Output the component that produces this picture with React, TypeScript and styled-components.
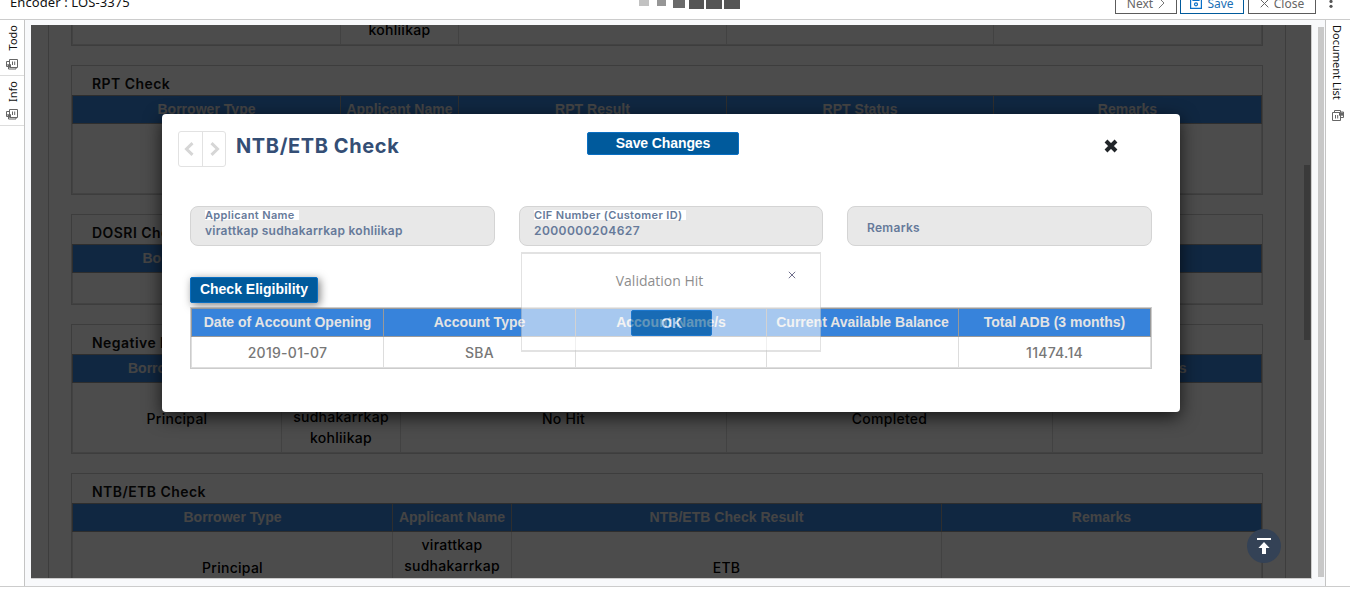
import React from "react";
import styled, { createGlobalStyle } from "styled-components";

const sans = `"Noto Sans", "Open Sans", sans-serif`;
const arial = `"Liberation Sans", Arial, sans-serif`;
const geo = `Inter, "Open Sans", sans-serif`;

const GlobalStyle = createGlobalStyle`
  *, *::before, *::after { box-sizing: border-box; }
  body { margin: 0; background: #fff; overflow: hidden; }
  svg { display: block; flex: none; }
`;

const Shell = styled.div`
  width: 1350px;
  height: 602px;
  display: flex;
  flex-direction: column;
  overflow: hidden;
  background: #fff;
  font-family: ${sans};
`;

const TopBar = styled.header`
  flex: none;
  height: 20px;
  border-bottom: 1px solid #ccc;
  display: flex;
  align-items: flex-start;
  overflow: hidden;
  padding: 0 15px 0 10px;
`;

const Crumb = styled.div`
  width: 629px;
  margin-top: -7px;
  font-size: 13px;
  letter-spacing: 0.1px;
  line-height: 18px;
  color: #111;
  white-space: nowrap;
`;

const Brand = styled.div`
  width: 476px;
  display: flex;
`;

const BrandTile = styled.i<{ $w: number; $h: number; $gap: number; $tone: string }>`
  width: ${(p) => p.$w}px;
  height: ${(p) => p.$h}px;
  margin-right: ${(p) => p.$gap}px;
  background: ${(p) => p.$tone};
`;

const Actions = styled.div`
  display: flex;
  margin-top: -10px;
`;

const ActionButton = styled.button<{ $width: number; $gap: number; $accent?: boolean }>`
  width: ${(p) => p.$width}px;
  height: 24px;
  margin: 0 ${(p) => p.$gap}px 0 0;
  padding: 2px 0 0;
  border: 1px solid ${(p) => (p.$accent ? "#005a9c" : "#5c5c5c")};
  background: #fff;
  color: ${(p) => (p.$accent ? "#1a6fb5" : "#666")};
  display: flex;
  align-items: center;
  justify-content: center;
  gap: 5px;
  font: 12px ${sans};
`;

const Main = styled.div`
  flex: none;
  height: 567px;
  display: flex;
  border-bottom: 1px solid #ccc;
  background: #f8f9fb;
`;

const Rail = styled.aside<{ $side: "left" | "right" }>`
  width: 25px;
  flex: none;
  background: #fff;
  border: 0 solid #c4c4c4;
  border-width: ${(p) => (p.$side === "left" ? "0 1px 0 0" : "0 0 0 1px")};
`;

const RailTab = styled.div<{ $height: number; $flip?: boolean }>`
  height: ${(p) => p.$height}px;
  display: flex;
  flex-direction: column;
  align-items: center;
  justify-content: space-between;
  padding: 5px ${(p) => (p.$flip ? 0 : 1)}px ${(p) => (p.$flip ? 5 : 6)}px 0;
  border-bottom: ${(p) => (p.$flip ? "1px solid #ddd" : "0")};
`;

const RailLabel = styled.span<{ $flip?: boolean }>`
  writing-mode: vertical-rl;
  transform: ${(p) => (p.$flip ? "rotate(180deg)" : "none")};
  font-size: 11px;
  line-height: 15px;
  color: #111;
  white-space: nowrap;
`;

const Frame = styled.main`
  position: relative;
  width: 1281px;
  height: 554px;
  margin: 5px 0 0 6px;
  border: 0 solid #ccc;
  border-width: 0 1px 1px 0;
  overflow: hidden;
  background: #fff;
`;

const ScrollTrack = styled.div`
  margin: 7px 1px 0 6px;
  width: 6px;
  height: 550px;
  background: #c8c8c8;
`;

const Page = styled.div`
  width: 1238px;
  margin: -109px 0 0 17px;
  padding: 0 22px;
  border: 0 solid #ccc;
  border-width: 0 1px;
  display: flex;
  flex-direction: column;
  gap: 19px;
`;

const Card = styled.section`
  border: 1px solid #ccc;
  flex: none;
`;

const CardTitle = styled.h3`
  margin: 0;
  height: 29px;
  padding: 7px 0 0 20px;
  font: 600 14px/21px ${geo};
  letter-spacing: 0.45px;
  color: #111;
`;

const Table = styled.div<{ $body: number }>`
  display: grid;
  grid-template-rows: 29px ${(p) => p.$body}px;
`;

const Row = styled.div<{ $cols: string }>`
  display: grid;
  grid-template-columns: ${(p) => p.$cols};
`;

const HeadRow = styled(Row)`
  background: #3783db;
  border: 1px solid #999;
`;

const BodyRow = styled(Row)`
  border: 1px solid #dedede;
  border-top: 0;
`;

const HeadCell = styled.div`
  border-right: 1px solid #999;
  display: flex;
  align-items: center;
  justify-content: center;
  padding-bottom: 2px;
  font: bold 14px ${arial};
  letter-spacing: 0.03px;
  color: #e4e4e4;
  white-space: nowrap;
  &:last-child { border-right: 0; }
`;

const BodyCell = styled.div<{ $shift?: number }>`
  border-right: 1px solid #ddd;
  display: flex;
  align-items: center;
  justify-content: center;
  text-align: center;
  padding-top: ${(p) => Math.max(p.$shift ?? 0, 0)}px;
  padding-bottom: ${(p) => Math.max(-(p.$shift ?? 0), 0)}px;
  font: 500 14px/21px ${geo};
  letter-spacing: 0.27px;
  color: #000;
  white-space: pre-line;
  &:last-child { border-right: 0; }
`;

const Overlay = styled.div`
  position: absolute;
  inset: 0;
  background: rgba(0, 0, 0, 0.7);
`;

const InnerThumb = styled.div`
  position: absolute;
  left: 1273px;
  top: 140px;
  width: 6px;
  height: 175px;
  background: #3a3a3a;
`;

const ToTop = styled.button`
  position: absolute;
  left: 1216px;
  top: 504px;
  width: 34px;
  height: 34px;
  padding: 0;
  border: 0;
  border-radius: 50%;
  background: #344256;
  display: grid;
  place-items: center;
`;

const Modal = styled.div`
  position: absolute;
  left: 131px;
  top: 89px;
  width: 1018px;
  height: 298px;
  padding: 17px 28px 0;
  border-radius: 4px;
  background: #fff;
  box-shadow: 0 5px 18px rgba(0, 0, 0, 0.7);
`;

const ModalHead = styled.div`
  height: 75px;
  display: flex;
  align-items: flex-start;
  margin-left: -12px;
`;

const Pager = styled.div`
  display: flex;
  width: 48px;
  height: 36px;
  border: 1px solid #e2e2e2;
  border-radius: 3px;
`;

const PagerButton = styled.button`
  flex: 1;
  padding: 0 3px 1px 0;
  border: 0;
  background: none;
  display: grid;
  place-items: center;
  & + & { border-left: 1px solid #e2e2e2; padding: 0 0 1px 2px; }
`;

const ModalTitle = styled.h2`
  width: 351px;
  margin: 2px 0 0 10px;
  font: 700 20px/26px ${geo};
  letter-spacing: 0.6px;
  color: #344e75;
`;

const PrimaryButton = styled.button<{ $w: number; $h: number; $raised?: boolean }>`
  width: ${(p) => p.$w}px;
  height: ${(p) => p.$h}px;
  padding: 0 0 2px;
  border: 1px solid #0a6fc2;
  border-radius: 2px;
  background: #005a9c;
  color: #fff;
  font: bold 14px ${arial};
  letter-spacing: ${(p) => (p.$raised ? 0 : -0.1)}px;
  box-shadow: ${(p) => (p.$raised ? "2px 2px 8px rgba(0,0,0,.5)" : "none")};
`;

const SaveSlot = styled.div`
  margin-top: 1px;
  width: 517px;
  display: flex;
`;

const CloseSlot = styled.div`
  margin-top: 8px;
`;

const Fields = styled.div`
  display: grid;
  grid-template-columns: 305px 304px 305px;
  gap: 24px;
`;

const Field = styled.div<{ $empty?: boolean }>`
  height: 40px;
  border: 1px solid #d4d4d4;
  border-radius: 8px;
  background: #e8e8e8;
  padding: ${(p) => (p.$empty ? "12px 0 0 19px" : "3px 0 0 14px")};
  font: 600 12px/18px ${geo};
  letter-spacing: ${(p) => (p.$empty ? 0.3 : 0)}px;
  color: #667a9a;
`;

const FieldLabel = styled.span`
  display: block;
  width: max-content;
  height: 10px;
  padding-right: 4px;
  background: #fff;
  font-size: 11px;
  line-height: 10px;
  letter-spacing: 0.35px;
  white-space: nowrap;
`;

const FieldValue = styled.span<{ $track: number }>`
  display: block;
  margin-top: 2px;
  letter-spacing: ${(p) => p.$track}px;
  white-space: nowrap;
`;

const CheckSlot = styled.div`
  height: 61px;
  padding-top: 31px;
`;

const Accounts = styled.div`
  border: 1px solid #ccc;
  display: grid;
  grid-template-rows: 29px 31px;
  ${HeadCell} { letter-spacing: 0; }
  ${BodyCell} { color: #777; font-weight: 500; }
`;

const Toast = styled.div`
  position: absolute;
  left: 359px;
  top: 138px;
  width: 300px;
  height: 100px;
  border: 1px solid #ccc;
  border-width: 2px 1px;
  background: #fff;
  opacity: 0.56;
  display: grid;
  grid-template-columns: 1fr 30px;
  grid-template-rows: 54px 26px;
`;

const ToastText = styled.p`
  margin: 16px 0 0;
  padding-left: 7px;
  text-align: center;
  font: 400 14px/22px "Open Sans", sans-serif;
  letter-spacing: 0;
  color: #333;
`;

const ToastClose = styled.div`
  padding-top: 17px;
  margin-left: -2px;
`;

const OkButton = styled.button`
  grid-column: 1 / 3;
  width: 81px;
  height: 26px;
  margin: 2px 0 0 109px;
  padding: 0;
  border: 1px solid #0a6fc2;
  border-radius: 2px;
  background: #005a99;
  color: #fff;
  font: bold 14px ${arial};
  letter-spacing: -0.3px;
`;

const StackIcon = ({ mirrored }: { mirrored?: boolean }) => (
  <svg width="12" height="11" viewBox="0 0 12 11" fill="none" stroke="#666">
    {mirrored ? (
      <>
        <path d="M.5 2.500h8v8h-8z M3.500 5v3.500 M5.700 5v3.500" />
        <path d="M2.500 2.500v-2h6v1.500h3v5.500H9" />
        <path d="M7 2.500h4v3.200H7z" fill="#666" stroke="none" />
      </>
    ) : (
      <>
        <path d="M3.500.5h8v8h-8z M6.500 2.500v3.500 M8.700 2.500v3.500" />
        <path d="M3 2.500H.5v5H2.500v2.500h7.500v-1.500" />
        <path d="M1 5.200h4v2.800H2.200z" fill="#666" stroke="none" />
      </>
    )}
  </svg>
);

const Arrow = ({ right }: { right?: boolean }) => (
  <svg width="10" height="14" viewBox="0 0 10 14" fill="none" stroke="#d6d6d6" strokeWidth="3">
    <path d={right ? "M1.500 1.200 7.500 7 1.500 12.800" : "M8.500 1.200 2.500 7 8.500 12.800"} />
  </svg>
);

interface Check {
  title: string;
  cols: string;
  body: number;
  heads: string[];
  cells: string[];
}

const applicant = "virattkap\nsudhakarrkap\nkohliikap";

const checks: Check[] = [
  {
    title: "CFIB Check",
    cols: "268px 118px 268px 267px 267px",
    body: 70,
    heads: ["Borrower Type", "Applicant Name", "Result", "Status", "Remarks"],
    cells: ["", applicant, "", "", ""],
  },
  {
    title: "RPT Check",
    cols: "268px 118px 268px 267px 267px",
    body: 70,
    heads: ["Borrower Type", "Applicant Name", "RPT Result", "RPT Status", "Remarks"],
    cells: ["", "", "", "", ""],
  },
  {
    title: "DOSRI Check",
    cols: "238px 238px 238px 237px 237px",
    body: 31,
    heads: ["Borrower Type", "", "", "", ""],
    cells: ["", "", "", "", ""],
  },
  {
    title: "Negative List Check",
    cols: "209px 119px 326px 326px 208px",
    body: 70,
    heads: ["Borrower Type", "", "", "", "Remarks"],
    cells: ["Principal", applicant, "No Hit", "Completed", ""],
  },
  {
    title: "NTB/ETB Check",
    cols: "320px 119px 430px 319px",
    body: 70,
    heads: ["Borrower Type", "Applicant Name", "NTB/ETB Check Result", "Remarks"],
    cells: ["Principal", applicant, "ETB", ""],
  },
];

const accountCols = "192px 192px 191px 192px 191px";
const accountHeads = ["Date of Account Opening", "Account Type", "Account Name/s", "Current Available Balance", "Total ADB (3 months)"];
const accountCells = ["2019-01-07", "SBA", "", "", "11474.14"];

const tiles = [
  [10, 6, 8, "#c2c2c2"],
  [9, 6, 7, "#969696"],
  [12, 8, 4, "#6a6a6a"],
  [15, 9, 2, "#555"],
  [16, 9, 2, "#555"],
  [16, 9, 0, "#555"],
] as const;

export default function App() {
  return (
    <Shell>
      <GlobalStyle />
      <TopBar>
        <Crumb>Encoder : LOS-3375</Crumb>
        <Brand>
          {tiles.map(([w, h, gap, tone], i) => (
            <BrandTile key={i} $w={w} $h={h} $gap={gap} $tone={tone} />
          ))}
        </Brand>
        <Actions>
          <ActionButton $width={62} $gap={3}>
            Next
            <svg width="7" height="12" viewBox="0 0 7 12" fill="none" stroke="#777">
              <path d="M.8.8 6 6 .8 11.2" />
            </svg>
          </ActionButton>
          <ActionButton $width={64} $gap={4} $accent>
            <svg width="12" height="12" viewBox="0 0 12 12" fill="none" stroke="#0a6fc8" strokeWidth="1.2">
              <path d="M.6.6h10.800v10.800H.6z M3 .5v3h6v-3" />
              <circle cx="6" cy="7.300" r="1.500" />
            </svg>
            Save
          </ActionButton>
          <ActionButton $width={68} $gap={13}>
            <svg width="9" height="9" viewBox="0 0 9 9" stroke="#666">
              <path d="M.7.7 8.3 8.3 M8.3.7.7 8.3" />
            </svg>
            Close
          </ActionButton>
          <svg width="4" height="20" viewBox="0 0 4 20" fill="#555">
            <circle cx="2" cy="11.5" r="1.6" />
            <circle cx="2" cy="16.3" r="1.6" />
          </svg>
        </Actions>
      </TopBar>

      <Main>
        <Rail $side="left">
          <RailTab $height={56} $flip>
            <RailLabel $flip>Todo</RailLabel>
            <StackIcon />
          </RailTab>
          <RailTab $height={50} $flip>
            <RailLabel $flip>Info</RailLabel>
            <StackIcon />
          </RailTab>
        </Rail>

        <Frame>
          <Page>
            {checks.map((c) => (
              <Card key={c.title}>
                <CardTitle>{c.title}</CardTitle>
                <Table $body={c.body}>
                  <HeadRow $cols={c.cols}>
                    {c.heads.map((h, i) => (
                      <HeadCell key={i}>{h}</HeadCell>
                    ))}
                  </HeadRow>
                  <BodyRow $cols={c.cols}>
                    {c.cells.map((v, i) => (
                      <BodyCell key={i} $shift={v.includes("\n") ? -2 : 2}>{v}</BodyCell>
                    ))}
                  </BodyRow>
                </Table>
              </Card>
            ))}
          </Page>
          <Overlay />
          <InnerThumb />
          <ToTop aria-label="Back to top">
            <svg width="16" height="18" viewBox="0 0 16 18" fill="#fff">
              <path d="M1 1h14v2H1z M8 5l5.600 6H10v6H6v-6H2.400z" />
            </svg>
          </ToTop>

          <Modal>
            <ModalHead>
              <Pager>
                <PagerButton aria-label="Previous"><Arrow /></PagerButton>
                <PagerButton aria-label="Next"><Arrow right /></PagerButton>
              </Pager>
              <ModalTitle>NTB/ETB Check</ModalTitle>
              <SaveSlot>
                <PrimaryButton $w={152} $h={23}>Save Changes</PrimaryButton>
              </SaveSlot>
              <CloseSlot>
                <svg width="14" height="14" viewBox="0 0 14 14" stroke="#212529" strokeWidth="4">
                  <path d="M2 2l10 10 M12 2 2 12" />
                </svg>
              </CloseSlot>
            </ModalHead>
            <Fields>
              <Field>
                <FieldLabel>Applicant Name</FieldLabel>
                <FieldValue $track={0.26}>virattkap sudhakarrkap kohliikap</FieldValue>
              </Field>
              <Field>
                <FieldLabel>CIF Number (Customer ID)</FieldLabel>
                <FieldValue $track={0.43}>2000000204627</FieldValue>
              </Field>
              <Field $empty>Remarks</Field>
            </Fields>
            <CheckSlot>
              <PrimaryButton $w={128} $h={26} $raised>Check Eligibility</PrimaryButton>
            </CheckSlot>
            <Accounts>
              <HeadRow $cols={accountCols}>
                {accountHeads.map((h) => (
                  <HeadCell key={h}>{h}</HeadCell>
                ))}
              </HeadRow>
              <BodyRow $cols={accountCols}>
                {accountCells.map((v, i) => (
                  <BodyCell key={i}>{v}</BodyCell>
                ))}
              </BodyRow>
            </Accounts>
            <Toast>
              <ToastText>Validation Hit</ToastText>
              <ToastClose>
                <svg width="8" height="8" viewBox="0 0 8 8" stroke="#003">
                  <path d="M.8.8 7.200 7.200 M7.200.8.8 7.200" />
                </svg>
              </ToastClose>
              <OkButton>OK</OkButton>
            </Toast>
          </Modal>
        </Frame>

        <ScrollTrack />
        <Rail $side="right">
          <RailTab $height={107}>
            <RailLabel>Document List</RailLabel>
            <StackIcon mirrored />
          </RailTab>
        </Rail>
      </Main>
    </Shell>
  );
}
